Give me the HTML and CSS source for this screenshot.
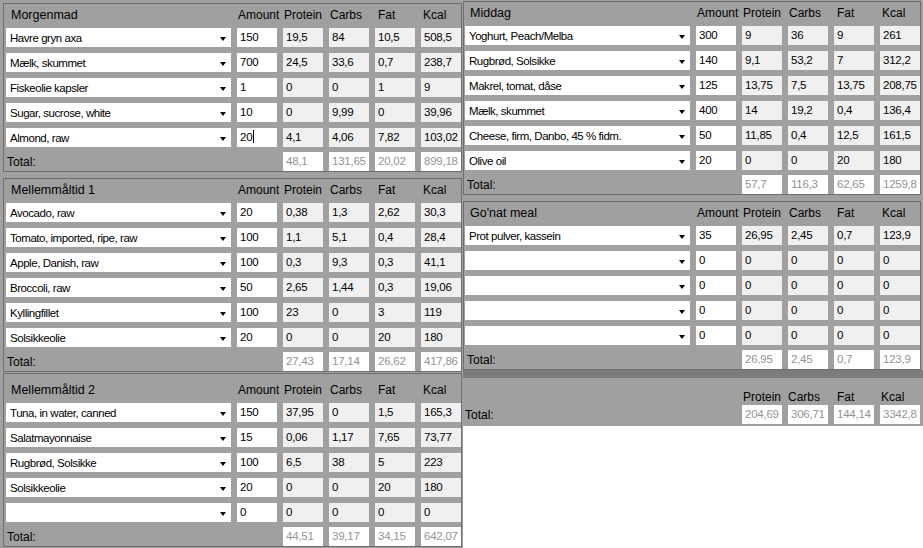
FILE: index.html
```html
<!DOCTYPE html>
<html lang="da">
<head>
  <meta charset="UTF-8" />
  <title>Kostplan</title>
  <link rel="stylesheet" href="styles.css">
</head>
<body>
  <div id="app">

    <div class="col col-left">

      <section class="panel">
        <div class="grid head">
          <span class="title">Morgenmad</span><span>Amount</span><span>Protein</span><span>Carbs</span><span>Fat</span><span>Kcal</span>
        </div>
        <div class="grid row">
          <div class="combo"><span>Havre gryn axa</span><i class="arrow"></i></div>
          <div class="box amount">150</div><div class="box ro">19,5</div><div class="box ro">84</div><div class="box ro">10,5</div><div class="box ro">508,5</div>
        </div>
        <div class="grid row">
          <div class="combo"><span>Mælk, skummet</span><i class="arrow"></i></div>
          <div class="box amount">700</div><div class="box ro">24,5</div><div class="box ro">33,6</div><div class="box ro">0,7</div><div class="box ro">238,7</div>
        </div>
        <div class="grid row">
          <div class="combo"><span>Fiskeolie kapsler</span><i class="arrow"></i></div>
          <div class="box amount">1</div><div class="box ro">0</div><div class="box ro">0</div><div class="box ro">1</div><div class="box ro">9</div>
        </div>
        <div class="grid row">
          <div class="combo"><span>Sugar, sucrose, white</span><i class="arrow"></i></div>
          <div class="box amount">10</div><div class="box ro">0</div><div class="box ro">9,99</div><div class="box ro">0</div><div class="box ro">39,96</div>
        </div>
        <div class="grid row">
          <div class="combo"><span>Almond, raw</span><i class="arrow"></i></div>
          <div class="box amount focused">20<i class="caret"></i></div><div class="box ro">4,1</div><div class="box ro">4,06</div><div class="box ro">7,82</div><div class="box ro">103,02</div>
        </div>
        <div class="grid total">
          <span class="total-label">Total:</span><span></span>
          <div class="box sum">48,1</div><div class="box sum">131,65</div><div class="box sum">20,02</div><div class="box sum">899,18</div>
        </div>
      </section>

      <section class="panel panel-2">
        <div class="grid head">
          <span class="title">Mellemmåltid 1</span><span>Amount</span><span>Protein</span><span>Carbs</span><span>Fat</span><span>Kcal</span>
        </div>
        <div class="grid row">
          <div class="combo"><span>Avocado, raw</span><i class="arrow"></i></div>
          <div class="box amount">20</div><div class="box ro">0,38</div><div class="box ro">1,3</div><div class="box ro">2,62</div><div class="box ro">30,3</div>
        </div>
        <div class="grid row">
          <div class="combo"><span>Tomato, imported, ripe, raw</span><i class="arrow"></i></div>
          <div class="box amount">100</div><div class="box ro">1,1</div><div class="box ro">5,1</div><div class="box ro">0,4</div><div class="box ro">28,4</div>
        </div>
        <div class="grid row">
          <div class="combo"><span>Apple, Danish, raw</span><i class="arrow"></i></div>
          <div class="box amount">100</div><div class="box ro">0,3</div><div class="box ro">9,3</div><div class="box ro">0,3</div><div class="box ro">41,1</div>
        </div>
        <div class="grid row">
          <div class="combo"><span>Broccoli, raw</span><i class="arrow"></i></div>
          <div class="box amount">50</div><div class="box ro">2,65</div><div class="box ro">1,44</div><div class="box ro">0,3</div><div class="box ro">19,06</div>
        </div>
        <div class="grid row">
          <div class="combo"><span>Kyllingfillet</span><i class="arrow"></i></div>
          <div class="box amount">100</div><div class="box ro">23</div><div class="box ro">0</div><div class="box ro">3</div><div class="box ro">119</div>
        </div>
        <div class="grid row">
          <div class="combo"><span>Solsikkeolie</span><i class="arrow"></i></div>
          <div class="box amount">20</div><div class="box ro">0</div><div class="box ro">0</div><div class="box ro">20</div><div class="box ro">180</div>
        </div>
        <div class="grid total">
          <span class="total-label">Total:</span><span></span>
          <div class="box sum">27,43</div><div class="box sum">17,14</div><div class="box sum">26,62</div><div class="box sum">417,86</div>
        </div>
      </section>

      <section class="panel panel-3">
        <div class="grid head">
          <span class="title">Mellemmåltid 2</span><span>Amount</span><span>Protein</span><span>Carbs</span><span>Fat</span><span>Kcal</span>
        </div>
        <div class="grid row">
          <div class="combo"><span>Tuna, in water, canned</span><i class="arrow"></i></div>
          <div class="box amount">150</div><div class="box ro">37,95</div><div class="box ro">0</div><div class="box ro">1,5</div><div class="box ro">165,3</div>
        </div>
        <div class="grid row">
          <div class="combo"><span>Salatmayonnaise</span><i class="arrow"></i></div>
          <div class="box amount">15</div><div class="box ro">0,06</div><div class="box ro">1,17</div><div class="box ro">7,65</div><div class="box ro">73,77</div>
        </div>
        <div class="grid row">
          <div class="combo"><span>Rugbrød, Solsikke</span><i class="arrow"></i></div>
          <div class="box amount">100</div><div class="box ro">6,5</div><div class="box ro">38</div><div class="box ro">5</div><div class="box ro">223</div>
        </div>
        <div class="grid row">
          <div class="combo"><span>Solsikkeolie</span><i class="arrow"></i></div>
          <div class="box amount">20</div><div class="box ro">0</div><div class="box ro">0</div><div class="box ro">20</div><div class="box ro">180</div>
        </div>
        <div class="grid row">
          <div class="combo"><span></span><i class="arrow"></i></div>
          <div class="box amount">0</div><div class="box ro">0</div><div class="box ro">0</div><div class="box ro">0</div><div class="box ro">0</div>
        </div>
        <div class="grid total">
          <span class="total-label">Total:</span><span></span>
          <div class="box sum">44,51</div><div class="box sum">39,17</div><div class="box sum">34,15</div><div class="box sum">642,07</div>
        </div>
      </section>

    </div>

    <div class="col col-right">
      <div class="right-top">

        <section class="panel panel-r">
          <div class="grid head">
            <span class="title">Middag</span><span>Amount</span><span>Protein</span><span>Carbs</span><span>Fat</span><span>Kcal</span>
          </div>
          <div class="grid row">
            <div class="combo"><span>Yoghurt, Peach/Melba</span><i class="arrow"></i></div>
            <div class="box amount">300</div><div class="box ro">9</div><div class="box ro">36</div><div class="box ro">9</div><div class="box ro">261</div>
          </div>
          <div class="grid row">
            <div class="combo"><span>Rugbrød, Solsikke</span><i class="arrow"></i></div>
            <div class="box amount">140</div><div class="box ro">9,1</div><div class="box ro">53,2</div><div class="box ro">7</div><div class="box ro">312,2</div>
          </div>
          <div class="grid row">
            <div class="combo"><span>Makrel, tomat, dåse</span><i class="arrow"></i></div>
            <div class="box amount">125</div><div class="box ro">13,75</div><div class="box ro">7,5</div><div class="box ro">13,75</div><div class="box ro">208,75</div>
          </div>
          <div class="grid row">
            <div class="combo"><span>Mælk, skummet</span><i class="arrow"></i></div>
            <div class="box amount">400</div><div class="box ro">14</div><div class="box ro">19,2</div><div class="box ro">0,4</div><div class="box ro">136,4</div>
          </div>
          <div class="grid row">
            <div class="combo"><span>Cheese, firm, Danbo, 45 % fidm.</span><i class="arrow"></i></div>
            <div class="box amount">50</div><div class="box ro">11,85</div><div class="box ro">0,4</div><div class="box ro">12,5</div><div class="box ro">161,5</div>
          </div>
          <div class="grid row">
            <div class="combo"><span>Olive oil</span><i class="arrow"></i></div>
            <div class="box amount">20</div><div class="box ro">0</div><div class="box ro">0</div><div class="box ro">20</div><div class="box ro">180</div>
          </div>
          <div class="grid total">
            <span class="total-label">Total:</span><span></span>
            <div class="box sum">57,7</div><div class="box sum">116,3</div><div class="box sum">62,65</div><div class="box sum">1259,8</div>
          </div>
        </section>

        <section class="panel panel-r panel-gonat">
          <div class="grid head">
            <span class="title">Go'nat meal</span><span>Amount</span><span>Protein</span><span>Carbs</span><span>Fat</span><span>Kcal</span>
          </div>
          <div class="grid row">
            <div class="combo"><span>Prot pulver, kassein</span><i class="arrow"></i></div>
            <div class="box amount">35</div><div class="box ro">26,95</div><div class="box ro">2,45</div><div class="box ro">0,7</div><div class="box ro">123,9</div>
          </div>
          <div class="grid row">
            <div class="combo"><span></span><i class="arrow"></i></div>
            <div class="box amount">0</div><div class="box ro">0</div><div class="box ro">0</div><div class="box ro">0</div><div class="box ro">0</div>
          </div>
          <div class="grid row">
            <div class="combo"><span></span><i class="arrow"></i></div>
            <div class="box amount">0</div><div class="box ro">0</div><div class="box ro">0</div><div class="box ro">0</div><div class="box ro">0</div>
          </div>
          <div class="grid row">
            <div class="combo"><span></span><i class="arrow"></i></div>
            <div class="box amount">0</div><div class="box ro">0</div><div class="box ro">0</div><div class="box ro">0</div><div class="box ro">0</div>
          </div>
          <div class="grid row">
            <div class="combo"><span></span><i class="arrow"></i></div>
            <div class="box amount">0</div><div class="box ro">0</div><div class="box ro">0</div><div class="box ro">0</div><div class="box ro">0</div>
          </div>
          <div class="grid total">
            <span class="total-label">Total:</span><span></span>
            <div class="box sum">26,95</div><div class="box sum">2,45</div><div class="box sum">0,7</div><div class="box sum">123,9</div>
          </div>
        </section>

      </div>

      <div class="band"></div>

      <div class="grand">
        <div class="grid grand-head">
          <span></span><span></span><span>Protein</span><span>Carbs</span><span>Fat</span><span>Kcal</span>
        </div>
        <div class="grid grand-row">
          <span class="grand-label">Total:</span><span></span>
          <div class="box sum">204,69</div><div class="box sum">306,71</div><div class="box sum">144,14</div><div class="box sum">3342,8</div>
        </div>
      </div>
    </div>

  </div>
</body>
</html>
```

FILE: styles.css
```css
html, body {
  margin: 0;
  padding: 0;
  height: 100%;
  background: #a0a0a0;
  font-family: "Liberation Sans", Arial, sans-serif;
  color: #000;
}

#app {
  display: flex;
  width: 923px;
  height: 548px;
  overflow: hidden;
}

.col {
  box-sizing: border-box;
}

.col-left {
  width: 463px;
  padding: 3px 0 0 3px;
}

.col-right {
  width: 460px;
  background: #fff;
}

.right-top {
  background: #a0a0a0;
  padding-top: 1px;
}

/* group boxes */
.panel {
  border: 1px solid #6e6e6e;
  padding: 0 0 0 2px;
  box-sizing: border-box;
  width: 459px;
}

.panel-r {
  width: 458px;
  padding-left: 1px;
}

.panel-2 {
  margin-top: 6px;
}

.panel-3 {
  margin-top: 1px;
  padding-top: 5px;
}

.panel-gonat {
  margin-top: 6px;
}

.grid {
  display: grid;
  grid-template-columns: 225px repeat(5, 40px);
  column-gap: 6px;
  align-items: center;
}

.head {
  height: 21px;
  margin-bottom: 3px;
  font-size: 12px;
}

.head span {
  padding-left: 1px;
  white-space: nowrap;
}

.head span:nth-child(5) {
  padding-left: 3px;
}

.head span:nth-child(6) {
  padding-left: 2px;
}

.head .title {
  font-size: 12.5px;
  padding-left: 5px;
}

.row {
  height: 19px;
}

.row + .row {
  margin-top: 6px;
}

.total {
  height: 19px;
  margin-top: 5px;
}

.total-label {
  font-size: 12px;
  padding-left: 1px;
}

.panel-r .total-label {
  padding-left: 2px;
}

/* combo box */
.combo {
  height: 19px;
  background: #fff;
  display: flex;
  align-items: center;
  justify-content: space-between;
  padding: 0 5px 0 4px;
  box-sizing: border-box;
  font-size: 11.5px;
  letter-spacing: -0.45px;
  white-space: nowrap;
}

.arrow {
  width: 0;
  height: 0;
  border-top: 4px solid #000;
  border-left: 3.5px solid transparent;
  border-right: 3.5px solid transparent;
  margin-top: 2px;
}

/* text boxes */
.box {
  height: 19px;
  box-sizing: border-box;
  padding-left: 3px;
  font-size: 11.5px;
  letter-spacing: -0.25px;
  line-height: 19px;
  white-space: nowrap;
  overflow: hidden;
}

.amount {
  background: #fff;
}

.ro {
  background: #f0f0f0;
}

.sum {
  background: #fff;
  color: #939393;
}

.caret {
  display: inline-block;
  width: 1px;
  height: 13px;
  background: #000;
  vertical-align: -2px;
  margin-left: 1px;
}

/* grand total */
.band {
  height: 8px;
  background: #7c7c7c;
}

.grand {
  background: #a0a0a0;
  padding: 10px 0 2px 2px;
}

.grand-head {
  height: 17px;
  font-size: 12px;
}

.grand-head span:nth-child(3) {
  padding-left: 1px;
}

.grand-head span:nth-child(5) {
  padding-left: 3px;
}

.grand-head span:nth-child(6) {
  padding-left: 1px;
}

.grand-row {
  height: 19px;
}

.grand-label {
  font-size: 12px;
}
```
